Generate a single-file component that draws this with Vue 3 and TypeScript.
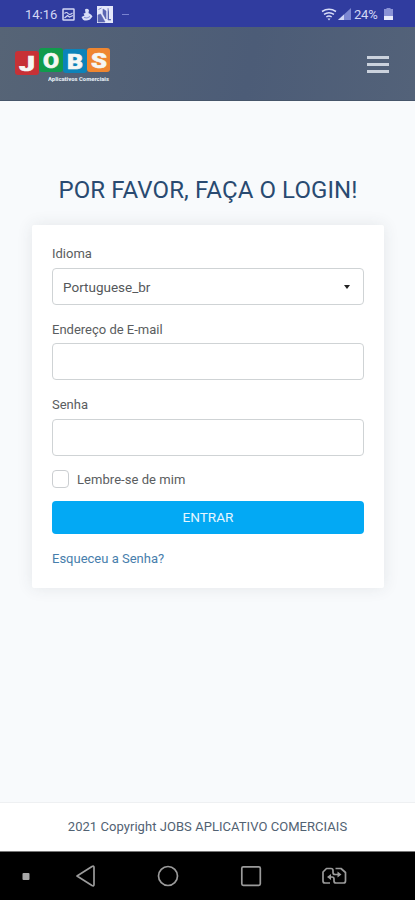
<script setup lang="ts">
import { ref } from 'vue'

interface Tile {
  letter: string
  color: string
}

const tiles: Tile[] = [
  { letter: 'J', color: 'red' },
  { letter: 'O', color: 'green' },
  { letter: 'B', color: 'blue' },
  { letter: 'S', color: 'orange' },
]

const language = ref('Portuguese_br')
const email = ref('')
const password = ref('')
const remember = ref(false)
</script>

<template>
  <div class="screen">
    <div class="status">
      <span class="time">14:16</span>
      <svg class="picture" width="13" height="13" viewBox="0 0 13 13">
        <rect x="1" y="1" width="11" height="11" rx="0.500" fill="none" stroke="#d3d8f5" stroke-width="1.500" />
        <path d="M2.500 5.500q2-2 3.500 0t4.500-.5M2.500 10l3-2.500 2 1.500L11 7.500" fill="none" stroke="#d3d8f5" stroke-width="1.200" />
      </svg>
      <svg class="person" width="12" height="13" viewBox="0 0 12 13">
        <path d="M4 1.500q2-1.500 4 .5L7.500 5q3.500 1.500 4 3.500L9 11.500q-4 2-7 .2L.5 9l3-1.500L2.500 5.500l2-.5z" fill="#d9def8" />
        <path d="M3 9.500l3 .5 3-1.500" stroke="#6b76c8" stroke-width="0.800" fill="none" />
      </svg>
      <svg class="app" width="16" height="17" viewBox="0 0 16 17">
        <rect width="16" height="17" fill="#e4e7fa" />
        <path d="M1 16V9l2.500-1L8 16zM6 3l3 2v8L6 8zM11 2v12h3" fill="#5a65b1" stroke="#5a65b1" stroke-width="0.600" />
        <path d="M12 1.500v11.500h3V1.500z" fill="#e4e7fa" />
        <path d="M1.500 3.500l3-1.500" fill="none" stroke="#8790cb" />
      </svg>
      <span class="more"></span>
      <span class="grow"></span>
      <svg class="wifi" width="16" height="13" viewBox="0 0 16 13">
        <path d="M1 3.500q7-4.500 14 0M3 6.300q5-3.300 10 0M5.300 9q2.700-1.800 5.400 0" fill="none" stroke="#d7dcf7" stroke-width="1.500" />
        <path d="M6.500 10.500h3L8 12.500z" fill="#d7dcf7" />
      </svg>
      <svg class="signal" width="13" height="12" viewBox="0 0 13 12">
        <path d="M0 12L13 0v12z" fill="#7d88d2" />
        <path d="M0 12l6-5.540V12z" fill="#d0d6f5" />
      </svg>
      <span class="percent">24%</span>
      <svg class="battery" width="9" height="12" viewBox="0 0 9 12">
        <path d="M2.500 0h4v1H9v11H0V1h2.500z" fill="#8992d6" />
        <path d="M0 8h9v4H0z" fill="#e8ebfc" />
      </svg>
    </div>

    <header class="topbar">
      <div class="logo">
        <div class="tiles">
          <span v-for="t in tiles" :key="t.letter" class="tile" :class="t.color">
            <svg viewBox="0 0 24 24" width="24" height="24">
              <text x="12" y="20" text-anchor="middle" textLength="16" lengthAdjust="spacingAndGlyphs">{{ t.letter }}</text>
            </svg>
          </span>
        </div>
        <svg class="tagline" width="62" height="8" viewBox="0 0 62 8">
          <text x="0" y="6" textLength="61" lengthAdjust="spacingAndGlyphs">Aplicativos Comerciais</text>
        </svg>
      </div>
      <button class="menu" type="button" aria-label="Menu"><i></i><i></i><i></i></button>
    </header>

    <main class="content">
      <h1>POR FAVOR, FAÇA O LOGIN!</h1>
      <form class="card" @submit.prevent>
        <label class="label idioma" for="language">Idioma</label>
        <div class="select">
          <select id="language" v-model="language" class="field">
            <option>Portuguese_br</option>
          </select>
          <i class="caret"></i>
        </div>
        <label class="label mail" for="email">Endereço de E-mail</label>
        <input id="email" v-model="email" class="field" type="email" />
        <label class="label senha" for="password">Senha</label>
        <input id="password" v-model="password" class="field" type="password" />
        <label class="remember">
          <input v-model="remember" type="checkbox" />
          <span>Lembre-se de mim</span>
        </label>
        <button class="submit" type="submit">ENTRAR</button>
        <a class="forgot" href="#">Esqueceu a Senha?</a>
      </form>
    </main>

    <footer class="footer"><span>2021 Copyright JOBS APLICATIVO COMERCIAIS</span></footer>

    <nav class="navbar">
      <svg width="415" height="48" viewBox="0 0 415 48" fill="none" stroke="#9b9b9b" stroke-width="1.700" stroke-linejoin="round">
        <rect x="22.500" y="21" width="7" height="7" rx="1" fill="#a8a8a8" stroke="none" />
        <path d="M77 24L92 14.500q2-1 2 1v17q0 2-2 1z" />
        <circle cx="168" cy="24" r="9.500" />
        <rect x="241.800" y="14.800" width="18.500" height="18.500" rx="1.500" />
        <path d="M330 31h-5q-2 0-2-2v-9l3.500-3.500h4.500q2 0 2 2v2q0 2 2 2h4" />
        <path d="M335.500 16.500h5.500l4.500 4V29q0 2-2 2h-7.500q-2 0-2-2v-2q0-2-2-2H329" />
        <path d="M327 25l4-3v6zM341.500 22.500l-4-3v6z" fill="#9b9b9b" stroke="none" />
      </svg>
    </nav>
  </div>
</template>

<style>
body {
  background: #f8fafc;
}
</style>

<style scoped>
* {
  box-sizing: border-box;
}
.screen {
  width: 415px;
  height: 900px;
  display: flex;
  flex-direction: column;
  overflow: hidden;
  background: #f8fafc;
  font-family: Roboto, 'Liberation Sans', sans-serif;
  font-size: 13px;
  color: #5a5d60;
}
.status {
  height: 27px;
  flex: none;
  display: flex;
  align-items: center;
  padding: 1px 22px 0 25px;
  background: #303c9f;
  color: #d3d8f5;
}
.time {
  width: 33px;
  font-size: 13px;
  white-space: nowrap;
}
.picture {
  margin-left: 4px;
}
.person {
  margin-left: 6px;
}
.app {
  margin-left: 4px;
}
.more {
  width: 7px;
  height: 1px;
  margin-left: 9px;
  background: #7983d0;
}
.grow {
  flex: 1;
}
.wifi {
  margin-right: 1px;
}
.percent {
  width: 26px;
  margin-left: 3px;
  font-size: 13px;
  letter-spacing: -0.2px;
}
.battery {
  margin-left: 4px;
}
.topbar {
  height: 74px;
  flex: none;
  display: flex;
  justify-content: space-between;
  padding: 21px 26px 0 15px;
  background: linear-gradient(100deg, #566476, #4c5c77 60%, #536279);
  border-bottom: 1px solid #46556a;
}
.logo {
  width: 95px;
}
.tiles {
  display: flex;
  height: 27px;
}
.tile {
  width: 24px;
  height: 24px;
  border-radius: 3px;
}
.tile svg {
  display: block;
}
.tile text {
  font: 900 21px Roboto, sans-serif;
  fill: #f5f7f4;
  stroke: #f5f7f4;
  stroke-width: 0.6px;
}
.red {
  margin-top: 3px;
  background: #c73136;
}
.green {
  background: #109b4c;
}
.blue {
  margin-top: 1px;
  background: #0c83b9;
}
.orange {
  width: 23px;
  background: #ef8630;
}
.tagline {
  display: block;
  margin: 0 0 0 33px;
}
.tagline text {
  font: 900 6px Roboto, sans-serif;
  fill: #dfe5ed;
}
.menu {
  width: 22px;
  height: 17px;
  margin-top: 8px;
  padding: 0;
  border: 0;
  background: none;
  display: flex;
  flex-direction: column;
  justify-content: space-between;
}
.menu i {
  width: 22px;
  height: 3px;
  background: #cbd2dd;
}
.content {
  height: 701px;
  flex: none;
  padding: 73px 31px 0 32px;
}
h1 {
  height: 32px;
  margin: 0;
  line-height: 32px;
  text-align: center;
  font-size: 24px;
  font-weight: 400;
  letter-spacing: 0.1px;
  white-space: nowrap;
  color: #294a71;
}
.card {
  display: flex;
  flex-direction: column;
  height: 363px;
  margin-top: 19px;
  padding: 20px 20px 0;
  background: #fff;
  border-radius: 2px;
  box-shadow: 0 0 16px rgba(50, 60, 70, 0.1);
}
.label {
  height: 18px;
  line-height: 18px;
}
.field {
  display: block;
  width: 100%;
  height: 37px;
  margin: 0;
  padding: 0 10px;
  border: 1px solid #cfd3d5;
  border-radius: 4px;
  background: #fff;
  font: 13.5px Roboto, sans-serif;
  color: #55585b;
  appearance: none;
  outline: 0;
}
.select {
  position: relative;
  margin-top: 5px;
}
.caret {
  position: absolute;
  right: 14px;
  top: 17px;
  border: 3.5px solid transparent;
  border-top: 4px solid #222;
  border-bottom: 0;
}
.mail,
.senha {
  margin-top: 15px;
  line-height: 19px;
}
.label + input {
  margin-top: 5px;
}
.senha + input {
  margin-top: 6px;
}
.remember {
  display: flex;
  align-items: center;
  gap: 8px;
  height: 18px;
  margin-top: 14px;
  letter-spacing: 0.05px;
}
.remember input {
  appearance: none;
  width: 17px;
  height: 18px;
  margin: 0;
  border: 1px solid #cbced1;
  border-radius: 4px;
}
.submit {
  height: 33px;
  margin: 13px 0 0;
  padding: 0 0 1px;
  border: 0;
  border-radius: 4px;
  background: #03a9f4;
  color: #e5f6ff;
  font: 13.6px Roboto, sans-serif;
}
.forgot {
  align-self: flex-start;
  height: 18px;
  margin-top: 16px;
  line-height: 18px;
  color: #477eac;
  text-decoration: none;
}
.footer {
  height: 50px;
  flex: none;
  border-top: 1px solid #eef0f2;
  background: #fff;
  line-height: 48px;
  text-align: center;
  font-size: 13px;
  letter-spacing: 0.05px;
  white-space: nowrap;
  color: #526273;
}
.navbar {
  height: 48px;
  flex: none;
  background: #000;
  box-shadow: 0 -1px 0 #777;
}
.navbar svg {
  display: block;
}
</style>
